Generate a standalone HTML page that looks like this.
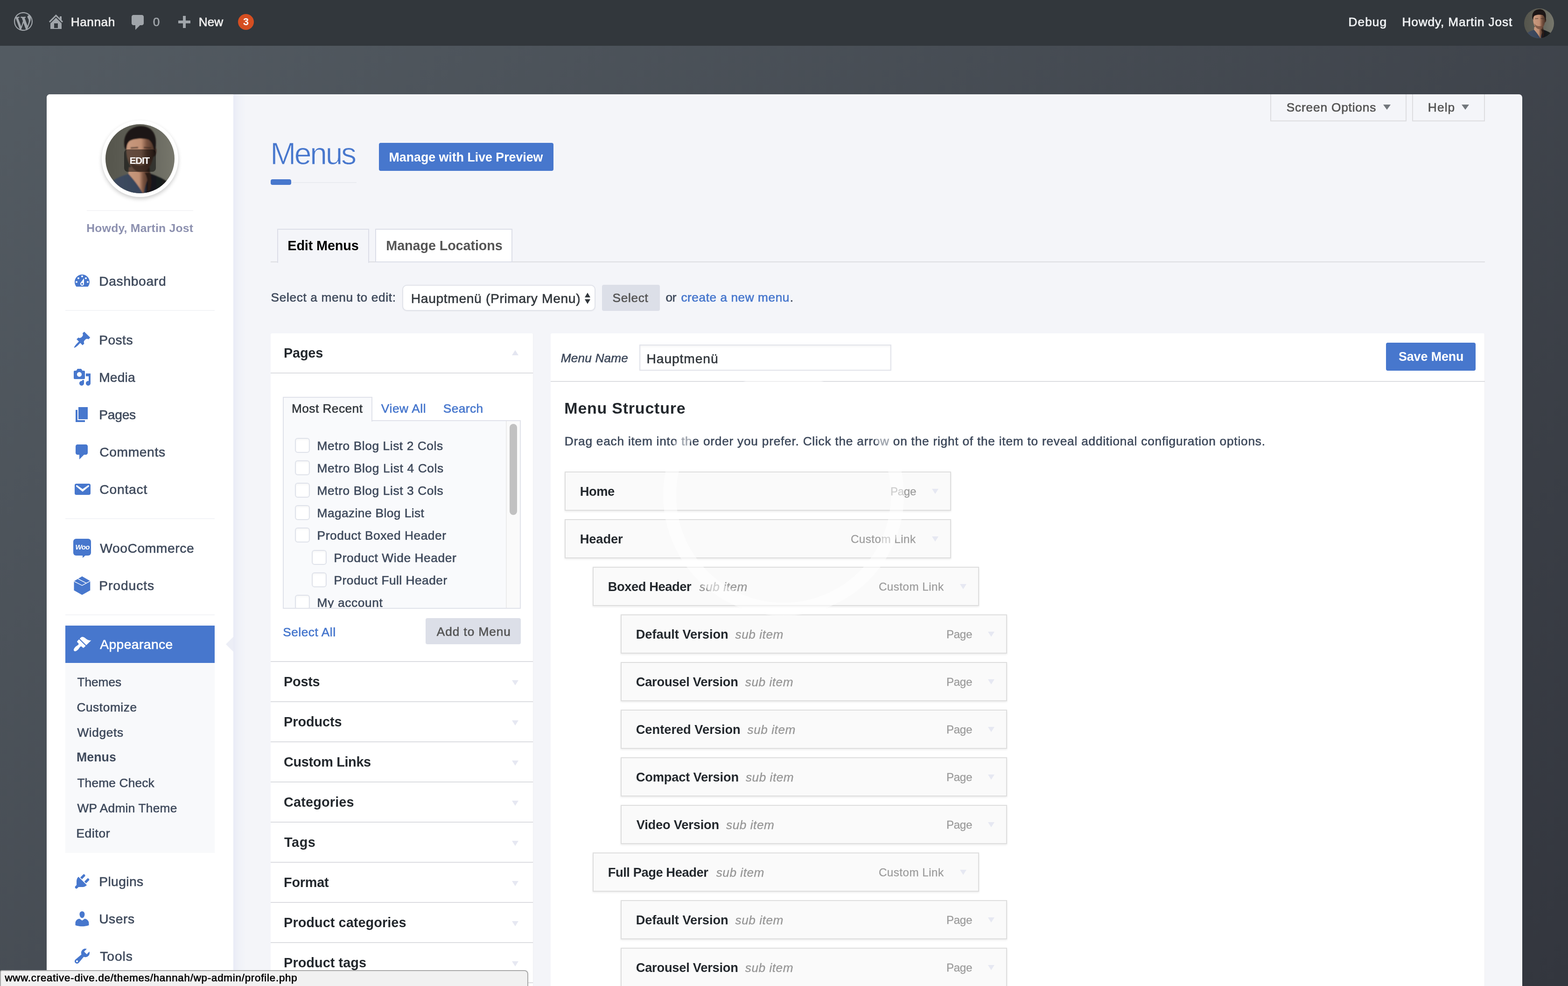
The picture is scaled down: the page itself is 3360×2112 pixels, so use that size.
<!DOCTYPE html>
<html lang="en">
<head>
<meta charset="utf-8">
<title>Menus ‹ Hannah — WordPress</title>
<style>
html,body{margin:0;padding:0}
body{width:3360px;height:2112px;overflow:hidden;position:relative;will-change:transform;
  font-family:'Liberation Sans',sans-serif;background:#434950}
header,nav,main,section,footer,ul,li{display:contents}
div,.t,.i{position:absolute;box-sizing:border-box}
.t{display:block;white-space:pre;line-height:1;margin:0;padding:0;text-decoration:none;font-weight:400;-webkit-text-stroke:.6px}
.b{-webkit-text-stroke:0}
.cb{width:32px;height:32px;background:#fff;border:2px solid #dfe2ea;border-radius:6px;box-shadow:inset 0 2px 4px rgba(0,0,0,.04)}
.mi{width:828px;height:84px;background:#fafafa;border:2px solid #dedede;box-shadow:0 2px 4px rgba(0,0,0,.08)}
.sep{height:2px;background:#f3f4f7;left:140px;width:320px}
.ln{height:2px;background:#dcdde1}
.ar{width:0;height:0;border-left:7px solid transparent;border-right:7px solid transparent;border-top:11px solid #e6e8f2}
</style>
</head>
<body>
<div style="left:0px;top:0px;width:3360px;height:2112px;background:linear-gradient(135deg,#545c63 0%,#33363e 100%)"></div>
<header>
<div style="left:0px;top:0px;width:3360px;height:98px;background:#32373c"></div>
<svg class="i" style="left:30px;top:26px;" width="40" height="40" viewBox="0 0 20 20"><path fill="#a0a5aa" fill-rule="evenodd" d="M20 10c0-5.51-4.49-10-10-10C4.48 0 0 4.49 0 10c0 5.52 4.48 10 10 10 5.51 0 10-4.48 10-10zM7.78 15.37L4.37 6.22c.55-.02 1.17-.08 1.17-.08.5-.06.44-1.13-.06-1.11 0 0-1.45.11-2.37.11-.18 0-.37 0-.58-.01C4.12 2.69 6.87 1.11 10 1.11c2.33 0 4.45.87 6.05 2.34-.68-.11-1.65.39-1.65 1.58 0 .74.45 1.36.9 2.1.35.61.55 1.36.55 2.46 0 1.49-1.4 5-1.4 5l-3.03-8.37c.54-.02.82-.17.82-.17.5-.05.44-1.25-.06-1.22 0 0-1.44.12-2.38.12-.87 0-2.33-.12-2.33-.12-.5-.03-.56 1.2-.06 1.22l.92.08 1.26 3.41zM17.41 10c.24-.64.74-1.87.43-4.25.7 1.29 1.05 2.71 1.05 4.25 0 3.29-1.73 6.24-4.4 7.78.97-2.59 1.94-5.2 2.92-7.78zM6.1 18.09C3.12 16.65 1.11 13.53 1.11 10c0-1.3.23-2.48.72-3.59C3.25 10.3 4.67 14.2 6.1 18.09zm4.03-6.63l2.58 6.98c-.86.29-1.76.45-2.71.45-.79 0-1.57-.11-2.29-.33.81-2.38 1.62-4.74 2.42-7.1z"/></svg>
<svg class="i" style="left:100px;top:26px;" width="40" height="40" viewBox="0 0 20 20"><path fill="#a0a5aa" fill-rule="evenodd" d="M16 8.5l1.53 1.53-1.06 1.06L10 4.62l-6.47 6.47-1.06-1.06L10 2.5l4 4v-2h2v4zm-6-2.46l6 5.99V18H4v-5.97zM12 17v-5H8v5h4z"/></svg>
<a class="t" style="left:151.80px;top:34.07px;font-size:26.26px;color:#eeeeee;letter-spacing:0.509px;-webkit-text-stroke:0.7px;">Hannah</a>
<svg class="i" style="left:275.6px;top:27.5px;" width="40" height="40" viewBox="0 0 20 20"><path fill="#a0a5aa" fill-rule="evenodd" d="M5 2h9c1.1 0 2 .9 2 2v7c0 1.1-.9 2-2 2h-2l-5 5v-5H5c-1.1 0-2-.9-2-2V4c0-1.1.9-2 2-2z"/></svg>
<span class="t" style="left:327.80px;top:34.07px;font-size:26.26px;color:#a0a5aa;">0</span>
<svg class="i" style="left:374px;top:30px;" width="40" height="40" viewBox="0 0 20 20"><path fill="#a0a5aa" fill-rule="evenodd" d="M17 7v3h-5v5H9v-5H4V7h5V2h3v5h5z"/></svg>
<a class="t" style="left:425.80px;top:34.07px;font-size:26.26px;color:#eeeeee;letter-spacing:-0.078px;-webkit-text-stroke:0.7px;">New</a>
<div style="left:510px;top:30px;width:34px;height:34px;background:#d54e21;border-radius:50%"></div>
<span class="t b" style="left:521.00px;top:36.19px;font-size:21.63px;color:#ffffff;font-weight:700;">3</span>
<a class="t" style="left:2889.50px;top:34.07px;font-size:26.26px;color:#eef0f2;letter-spacing:1.037px;-webkit-text-stroke:0.7px;">Debug</a>
<a class="t" style="left:3004.40px;top:34.07px;font-size:26.26px;color:#eef0f2;letter-spacing:0.862px;-webkit-text-stroke:0.7px;">Howdy, Martin Jost</a>
<svg class="i" style="left:3266px;top:18px;" width="64" height="64" viewBox="0 0 148 148"><defs><clipPath id="ca"><circle cx="74" cy="74" r="74"/></clipPath><linearGradient id="ga" x1="0" y1="0" x2="1" y2="0"><stop offset="0" stop-color="#55554c"/><stop offset=".45" stop-color="#5f5f56"/><stop offset="1" stop-color="#77776c"/></linearGradient><linearGradient id="sa" x1="0" y1="0" x2="1" y2="0"><stop offset="0" stop-color="#c99a7f"/><stop offset=".5" stop-color="#c08f73"/><stop offset=".68" stop-color="#7a5340"/><stop offset="1" stop-color="#3a2820"/></linearGradient><linearGradient id="ha" x1="0" y1="0" x2="1" y2="0"><stop offset="0" stop-color="#3f4c60"/><stop offset=".55" stop-color="#36435a"/><stop offset=".62" stop-color="#17181c"/><stop offset="1" stop-color="#1b1c20"/></linearGradient><filter id="fa" x="-20%" y="-20%" width="140%" height="140%"><feGaussianBlur stdDeviation="1.3"/></filter></defs><g clip-path="url(#ca)"><rect width="148" height="148" fill="url(#ga)"/><g filter="url(#fa)"><path d="M14 150 L17 120 C30 112 42 109 50 106 L96 106 C108 110 122 116 131 122 L136 150 Z" fill="url(#ha)"/><path d="M50 92 L94 92 L96 108 C90 118 84 132 82 148 L80 148 C70 130 58 116 49 106 Z" fill="url(#sa)"/><path d="M84 104 C90 112 92 128 90 146 L96 140 C100 126 98 112 96 104 Z" fill="#2b1a14"/><path d="M44 40 C44 22 60 16 76 17 C94 18 106 30 105 50 C108 50 110 54 109 60 C108 68 104 70 102 70 C100 86 90 102 76 103 C62 103 50 90 46 70 C44 60 44 50 44 40 Z" fill="url(#sa)"/><path d="M41 50 C36 22 52 5 76 4 C98 4 110 20 108 44 C108 52 106 58 104 62 C104 48 100 38 92 33 C82 30 62 30 52 36 C47 40 45 46 45 58 Z" fill="#1e1713"/><path d="M50 74 C54 92 64 103 76 103 C90 102 98 90 102 72 C96 84 88 88 76 88 C64 88 56 84 50 74 Z" fill="#6d4a3a" opacity=".75"/><path d="M54 51 L70 50 M82 50 L98 51" stroke="#3a2a22" stroke-width="3" fill="none" opacity=".7"/></g></g></svg>
</header>
<div style="left:100px;top:202px;width:3162px;height:1910px;background:#f4f5f9;border-radius:7px 7px 0 0"></div>
<div style="left:100px;top:202px;width:400px;height:1910px;background:#fff;border-radius:7px 0 0 0"></div>
<div style="left:500px;top:202px;width:28px;height:1910px;background:linear-gradient(90deg,#e9ebf6 0%,#f0f2f8 45%,#f4f5f9 100%)"></div>
<nav>
<div style="left:218px;top:258px;width:164px;height:164px;border-radius:50%;background:#fff;box-shadow:0 4px 8px rgba(0,0,0,.2)"></div><svg class="i" style="left:226px;top:266px;" width="148" height="148" viewBox="0 0 148 148"><defs><clipPath id="cb"><circle cx="74" cy="74" r="74"/></clipPath><linearGradient id="gb" x1="0" y1="0" x2="1" y2="0"><stop offset="0" stop-color="#55554c"/><stop offset=".45" stop-color="#5f5f56"/><stop offset="1" stop-color="#77776c"/></linearGradient><linearGradient id="sb" x1="0" y1="0" x2="1" y2="0"><stop offset="0" stop-color="#c99a7f"/><stop offset=".5" stop-color="#c08f73"/><stop offset=".68" stop-color="#7a5340"/><stop offset="1" stop-color="#3a2820"/></linearGradient><linearGradient id="hb" x1="0" y1="0" x2="1" y2="0"><stop offset="0" stop-color="#3f4c60"/><stop offset=".55" stop-color="#36435a"/><stop offset=".62" stop-color="#17181c"/><stop offset="1" stop-color="#1b1c20"/></linearGradient><filter id="fb" x="-20%" y="-20%" width="140%" height="140%"><feGaussianBlur stdDeviation="1.3"/></filter></defs><g clip-path="url(#cb)"><rect width="148" height="148" fill="url(#gb)"/><g filter="url(#fb)"><path d="M14 150 L17 120 C30 112 42 109 50 106 L96 106 C108 110 122 116 131 122 L136 150 Z" fill="url(#hb)"/><path d="M50 92 L94 92 L96 108 C90 118 84 132 82 148 L80 148 C70 130 58 116 49 106 Z" fill="url(#sb)"/><path d="M84 104 C90 112 92 128 90 146 L96 140 C100 126 98 112 96 104 Z" fill="#2b1a14"/><path d="M44 40 C44 22 60 16 76 17 C94 18 106 30 105 50 C108 50 110 54 109 60 C108 68 104 70 102 70 C100 86 90 102 76 103 C62 103 50 90 46 70 C44 60 44 50 44 40 Z" fill="url(#sb)"/><path d="M41 50 C36 22 52 5 76 4 C98 4 110 20 108 44 C108 52 106 58 104 62 C104 48 100 38 92 33 C82 30 62 30 52 36 C47 40 45 46 45 58 Z" fill="#1e1713"/><path d="M50 74 C54 92 64 103 76 103 C90 102 98 90 102 72 C96 84 88 88 76 88 C64 88 56 84 50 74 Z" fill="#6d4a3a" opacity=".75"/><path d="M54 51 L70 50 M82 50 L98 51" stroke="#3a2a22" stroke-width="3" fill="none" opacity=".7"/></g></g></svg>
<div style="left:266px;top:320px;width:68px;height:48px;background:rgba(0,0,0,.5);border-radius:8px"></div>
<span class="t b" style="left:277.80px;top:334.26px;font-size:20.6px;color:#ffffff;font-weight:700;letter-spacing:-1.177px;">EDIT</span>
<div style="left:186px;top:450px;width:228px;height:2px;background:#f4f4f7"></div>
<span class="t b" style="left:185.30px;top:477.37px;font-size:24.72px;color:#8c90af;font-weight:700;letter-spacing:0.227px;">Howdy, Martin Jost</span>
<div style="left:140px;top:1340px;width:320px;height:80px;background:#4777cd"></div>
<div style="left:140px;top:1420px;width:320px;height:407px;background:#f8f9fb"></div>
<div style="left:484px;top:1364px;width:0px;height:0px;width:0;height:0;border-top:16px solid transparent;border-bottom:16px solid transparent;border-right:16px solid #eceef6"></div>
<svg class="i" style="left:156px;top:582px;" width="40" height="40" viewBox="0 0 20 20"><path fill="#4777cd" fill-rule="evenodd" d="M3.76 16h12.48c1.1-1.37 1.76-3.11 1.76-5 0-4.42-3.58-8-8-8s-8 3.58-8 8c0 1.89.66 3.63 1.76 5zM10 4c.55 0 1 .45 1 1s-.45 1-1 1-1-.45-1-1 .45-1 1-1zM6 6c.55 0 1 .45 1 1s-.45 1-1 1-1-.45-1-1 .45-1 1-1zm8 0c.55 0 1 .45 1 1s-.45 1-1 1-1-.45-1-1 .45-1 1-1zm-5.37 5.55L12 7v6c0 1.1-.9 2-2 2s-2-.9-2-2c0-.57.24-1.08.63-1.45zM4 10c.55 0 1 .45 1 1s-.45 1-1 1-1-.45-1-1 .45-1 1-1zm12 0c.55 0 1 .45 1 1s-.45 1-1 1-1-.45-1-1 .45-1 1-1zm-5 3c0-.55-.45-1-1-1s-1 .45-1 1 .45 1 1 1 1-.45 1-1z"/></svg>
<a class="t" style="left:212.20px;top:588.06px;font-size:28.28px;color:#3f4a5c;letter-spacing:0.643px;">Dashboard</a>
<svg class="i" style="left:156px;top:708px;" width="40" height="40" viewBox="0 0 20 20"><path fill="#4777cd" fill-rule="evenodd" d="M10.44 3.02l1.82-1.82 6.36 6.35-1.83 1.82c-1.05-.68-2.48-.57-3.41.36l-.75.75c-.92.93-1.04 2.35-.35 3.41l-1.83 1.82-2.41-2.41-2.8 2.79c-.42.42-3.38 2.71-3.8 2.29s1.86-3.39 2.28-3.81l2.79-2.79L4.1 9.36l1.83-1.82c1.05.69 2.48.57 3.4-.36l.75-.75c.93-.92 1.05-2.35.36-3.41z"/></svg>
<a class="t" style="left:212.20px;top:714.06px;font-size:28.28px;color:#3f4a5c;letter-spacing:0.410px;">Posts</a>
<svg class="i" style="left:156px;top:788px;" width="40" height="40" viewBox="0 0 20 20"><path fill="#4777cd" fill-rule="evenodd" d="M13 11V4c0-.55-.45-1-1-1h-1.67L9 1H5L3.67 3H2c-.55 0-1 .45-1 1v7c0 .55.45 1 1 1h10c.55 0 1-.45 1-1zM7 4.5c1.38 0 2.5 1.12 2.5 2.5S8.38 9.5 7 9.5 4.5 8.38 4.5 7 5.62 4.5 7 4.5zM14 6h5v10.5c0 1.38-1.12 2.5-2.5 2.5S14 17.88 14 16.5s1.12-2.5 2.5-2.5c.17 0 .34.02.5.05V9h-3V6zm-4 8.05V13h2v3.5c0 1.38-1.12 2.5-2.5 2.5S7 17.88 7 16.5 8.12 14 9.5 14c.17 0 .34.02.5.05z"/></svg>
<a class="t" style="left:212.20px;top:794.06px;font-size:28.28px;color:#3f4a5c;letter-spacing:0.109px;">Media</a>
<svg class="i" style="left:156px;top:868px;" width="40" height="40" viewBox="0 0 20 20"><path fill="#4777cd" fill-rule="evenodd" d="M6 15V2h10v13H6zm-1 1h8v2H3V5h2v11z"/></svg>
<a class="t" style="left:212.20px;top:874.06px;font-size:28.28px;color:#3f4a5c;letter-spacing:-0.278px;">Pages</a>
<svg class="i" style="left:156px;top:948px;" width="40" height="40" viewBox="0 0 20 20"><path fill="#4777cd" fill-rule="evenodd" d="M5 2h9c1.1 0 2 .9 2 2v7c0 1.1-.9 2-2 2h-2l-5 5v-5H5c-1.1 0-2-.9-2-2V4c0-1.1.9-2 2-2z"/></svg>
<a class="t" style="left:213.20px;top:954.06px;font-size:28.28px;color:#3f4a5c;letter-spacing:0.598px;">Comments</a>
<svg class="i" style="left:156px;top:1028px;" width="40" height="40" viewBox="0 0 20 20"><path fill="#4777cd" fill-rule="evenodd" d="M3.87 4h13.25C18.37 4 19 4.59 19 5.79v8.42c0 1.19-.63 1.79-1.88 1.79H3.87c-1.25 0-1.88-.6-1.88-1.79V5.79c0-1.2.63-1.79 1.88-1.79zm6.62 8.6l6.74-5.53c.24-.2.43-.66.13-1.07-.29-.41-.82-.42-1.17-.17l-5.7 3.86L4.8 5.83c-.35-.25-.88-.24-1.17.17-.3.41-.11.87.13 1.07z"/></svg>
<a class="t" style="left:213.20px;top:1034.06px;font-size:28.28px;color:#3f4a5c;letter-spacing:0.790px;">Contact</a>
<div style="left:157px;top:1154px;width:38px;height:36px;background:#4777cd;border-radius:6px"></div><div style="left:177px;top:1188px;width:0;height:0;border-left:0 solid transparent;border-right:8px solid transparent;border-top:7px solid #4777cd"></div><span class="t b" style="left:161.5px;top:1164px;font-size:15px;font-weight:700;font-style:italic;color:#fff;letter-spacing:-.7px">Woo</span>
<a class="t" style="left:214.20px;top:1160.06px;font-size:28.28px;color:#3f4a5c;letter-spacing:0.560px;">WooCommerce</a>
<svg class="i" style="left:156px;top:1232px" width="40" height="44" viewBox="0 0 40 44"><path fill="#4777cd" d="M19.9 2.4 L37.3 12.6 L37.3 32.5 L19.9 42.3 L2.5 32.5 L2.5 13.1 Z"/><path d="M2.5 13.1 L19.9 22 L37.3 12.6 M11.2 7.8 L28.6 16.9" stroke="#fff" stroke-width="1.4" fill="none"/></svg>
<a class="t" style="left:212.20px;top:1240.06px;font-size:28.28px;color:#3f4a5c;letter-spacing:0.927px;">Products</a>
<svg class="i" style="left:156px;top:1360px;" width="40" height="40" viewBox="0 0 20 20"><path fill="#ffffff" fill-rule="evenodd" d="M14.48 11.06L7.41 3.99l1.5-1.5c.5-.56 2.3-.47 3.51.32 1.21.8 1.43 1.28 2.91 2.1 1.18.64 2.45 1.26 4.45.85zm-.71.71L6.7 4.7 4.93 6.47c-.39.39-.39 1.02 0 1.41l1.06 1.06c.39.39.39 1.03 0 1.42-.6.6-1.43 1.11-2.21 1.69-.35.26-.7.53-1.01.84C1.43 14.23.4 16.08 1.4 17.07c.99 1 2.84-.03 4.18-1.36.31-.31.58-.66.85-1.02.57-.78 1.08-1.61 1.69-2.21.39-.39 1.02-.39 1.41 0l1.06 1.06c.39.39 1.02.39 1.41 0z"/></svg>
<a class="t" style="left:214.20px;top:1366.06px;font-size:28.28px;color:#ffffff;letter-spacing:0.409px;">Appearance</a>
<svg class="i" style="left:156px;top:1868px;" width="40" height="40" viewBox="0 0 20 20"><path fill="#4777cd" fill-rule="evenodd" d="M13.11 4.36L9.87 7.6 8 5.73l3.24-3.24c.35-.34 1.05-.2 1.56.32.52.51.66 1.21.31 1.55zm-8 1.77l.91-1.12 9.01 9.01-1.19.84c-.71.71-2.63 1.16-3.82 1.16H6.14L4.9 17.26c-.59.59-1.54.59-2.12 0-.59-.58-.59-1.53 0-2.12l1.24-1.24v-3.88c0-1.13.4-3.19 1.09-3.89zm7.26 3.97l3.24-3.24c.34-.35 1.04-.21 1.55.31.52.51.66 1.21.31 1.55l-3.24 3.25z"/></svg>
<a class="t" style="left:212.20px;top:1874.06px;font-size:28.28px;color:#3f4a5c;letter-spacing:0.388px;">Plugins</a>
<svg class="i" style="left:156px;top:1948px;" width="40" height="40" viewBox="0 0 20 20"><path fill="#4777cd" fill-rule="evenodd" d="M10 9.25c-2.27 0-2.73-3.44-2.73-3.44C7 4.02 7.82 2 9.97 2c2.16 0 2.98 2.02 2.71 3.81 0 0-.41 3.44-2.68 3.44zm0 2.57L12.72 10c2.39 0 4.52 2.33 4.52 4.53v2.49s-3.65 1.13-7.24 1.13c-3.65 0-7.24-1.13-7.24-1.13v-2.49c0-2.25 1.94-4.48 4.47-4.48z"/></svg>
<a class="t" style="left:212.20px;top:1954.06px;font-size:28.28px;color:#3f4a5c;letter-spacing:0.505px;">Users</a>
<svg class="i" style="left:156px;top:2028px;" width="40" height="40" viewBox="0 0 20 20"><path fill="#4777cd" fill-rule="evenodd" d="M16.68 9.77c-1.34 1.34-3.3 1.67-4.95.99l-5.41 6.52c-.99.99-2.59.99-3.58 0s-.99-2.59 0-3.57l6.52-5.42c-.68-1.65-.35-3.61.99-4.95 1.28-1.28 3.12-1.62 4.72-1.06l-2.89 2.89 2.82 2.82 2.86-2.87c.53 1.58.18 3.39-1.08 4.65zM3.81 16.21c.4.39 1.04.39 1.43 0 .4-.4.4-1.04 0-1.43-.39-.4-1.03-.4-1.43 0-.39.39-.39 1.03 0 1.43z"/></svg>
<a class="t" style="left:214.20px;top:2034.06px;font-size:28.28px;color:#3f4a5c;letter-spacing:0.937px;">Tools</a>
<div class="sep" style="left:140px;top:664px;width:320px;height:2px;"></div>
<div class="sep" style="left:140px;top:1110px;width:320px;height:2px;"></div>
<div class="sep" style="left:140px;top:1316px;width:320px;height:2px;"></div>
<a class="t" style="left:165.40px;top:1447.77px;font-size:26.26px;color:#3f4a5c;">Themes</a>
<a class="t" style="left:164.40px;top:1501.77px;font-size:26.26px;color:#3f4a5c;letter-spacing:0.588px;">Customize</a>
<a class="t" style="left:165.40px;top:1555.77px;font-size:26.26px;color:#3f4a5c;letter-spacing:0.634px;">Widgets</a>
<a class="t b" style="left:163.90px;top:1609.33px;font-size:26.78px;color:#3f4a5c;font-weight:700;letter-spacing:0.055px;">Menus</a>
<a class="t" style="left:165.40px;top:1663.77px;font-size:26.26px;color:#3f4a5c;letter-spacing:0.193px;">Theme Check</a>
<a class="t" style="left:165.40px;top:1717.77px;font-size:26.26px;color:#3f4a5c;letter-spacing:0.256px;">WP Admin Theme</a>
<a class="t" style="left:163.40px;top:1771.77px;font-size:26.26px;color:#3f4a5c;letter-spacing:0.694px;">Editor</a>
</nav>
<main>
<div style="left:2722px;top:202px;width:292px;height:58px;border:2px solid #dddde0;border-top:0;background:#f4f5f9"></div>
<span class="t" style="left:2756.80px;top:217.07px;font-size:26.26px;color:#555555;letter-spacing:0.815px;-webkit-text-stroke:0.7px;">Screen Options</span>
<div style="left:2964px;top:224px;width:0px;height:0px;width:0;height:0;border-left:8px solid transparent;border-right:8px solid transparent;border-top:11px solid #72777c"></div>
<div style="left:3026px;top:202px;width:156px;height:58px;border:2px solid #dddde0;border-top:0;background:#f4f5f9"></div>
<span class="t" style="left:3059.80px;top:217.07px;font-size:26.26px;color:#555555;letter-spacing:1.137px;-webkit-text-stroke:0.7px;">Help</span>
<div style="left:3132px;top:224px;width:0px;height:0px;width:0;height:0;border-left:8px solid transparent;border-right:8px solid transparent;border-top:11px solid #72777c"></div>
<h1 class="t" style="left:579.20px;top:295.53px;font-size:66px;color:#4777cd;letter-spacing:-3.299px;-webkit-text-stroke:0.9px #f4f5f9;">Menus</h1>
<div style="left:624px;top:390px;width:140px;height:2px;background:#e9ebf1"></div>
<div style="left:580px;top:384px;width:44px;height:12px;background:#4777cd;border-radius:4px"></div>
<div style="left:812px;top:306px;width:374px;height:60px;background:#4777cd;border-radius:4px"></div>
<a class="t b" style="left:833.60px;top:323.73px;font-size:26.78px;color:#ffffff;font-weight:700;letter-spacing:-0.017px;">Manage with Live Preview</a>
<div style="left:580px;top:560px;width:2602px;height:2px;background:#dddee2"></div>
<div style="left:594px;top:490px;width:197px;height:73px;border:2px solid #dcdee8;border-bottom:0;background:#f4f5f9"></div>
<a class="t b" style="left:616.30px;top:512.09px;font-size:28.84px;color:#000000;font-weight:700;letter-spacing:-0.147px;">Edit Menus</a>
<div style="left:804px;top:490px;width:294px;height:72px;border:2px solid #dcdee8;background:#fff"></div>
<a class="t b" style="left:827.30px;top:512.09px;font-size:28.84px;color:#555555;font-weight:700;letter-spacing:-0.137px;">Manage Locations</a>
<label class="t" style="left:580.50px;top:623.97px;font-size:26.26px;color:#3f4a5c;letter-spacing:0.647px;">Select a menu to edit:</label>
<div style="left:862px;top:610px;width:414px;height:56px;border:2px solid #e1e3ea;border-radius:10px;background:#fff;box-shadow:0 1px 2px rgba(0,0,0,.05)"></div>
<span class="t" style="left:880.80px;top:624.66px;font-size:28.28px;color:#32373c;letter-spacing:0.613px;">Hauptmenü (Primary Menu)</span>
<div style="left:1253px;top:627px;width:0px;height:0px;width:0;height:0;border-left:6.5px solid transparent;border-right:6.5px solid transparent;border-bottom:10px solid #32373c"></div>
<div style="left:1253px;top:641px;width:0px;height:0px;width:0;height:0;border-left:6.5px solid transparent;border-right:6.5px solid transparent;border-top:10px solid #32373c"></div>
<div style="left:1290px;top:610px;width:124px;height:56px;background:#dcdfe8;border-radius:4px"></div>
<span class="t" style="left:1312.60px;top:624.77px;font-size:26.26px;color:#555555;letter-spacing:0.627px;">Select</span>
<span class="t" style="left:1426.60px;top:623.97px;font-size:26.26px;color:#3f4a5c;letter-spacing:-0.499px;">or</span>
<a class="t" style="left:1459.40px;top:623.97px;font-size:26.26px;color:#4777cd;letter-spacing:0.547px;">create a new menu</a>
<span class="t" style="left:1692.80px;top:623.97px;font-size:26.26px;color:#3f4a5c;">.</span>
<section>
<div style="left:580px;top:714px;width:563px;height:1398px;background:#fff;border-right:1px solid #efeff3;border-radius:3px 3px 0 0"></div>
<h3 class="t b" style="left:608.10px;top:742.19px;font-size:28.84px;color:#23282d;font-weight:700;letter-spacing:-0.201px;">Pages</h3>
<div style="left:1097px;top:750px;width:0px;height:0px;width:0;height:0;border-left:7px solid transparent;border-right:7px solid transparent;border-bottom:11px solid #e4e6f1"></div>
<div class="ln" style="left:580px;top:798px;width:562px;height:2px;"></div>
<div style="left:606px;top:900px;width:510px;height:404px;border:2px solid #e0e2ea;background:#f9fafc"></div>
<div style="left:606px;top:850px;width:192px;height:53px;border:2px solid #e0e2ea;border-bottom:0;background:#f9fafc"></div>
<a class="t" style="left:624.90px;top:861.57px;font-size:26.26px;color:#32373c;letter-spacing:0.474px;">Most Recent</a>
<a class="t" style="left:816.80px;top:861.57px;font-size:26.26px;color:#4777cd;letter-spacing:0.621px;">View All</a>
<a class="t" style="left:949.80px;top:861.57px;font-size:26.26px;color:#4777cd;letter-spacing:0.445px;">Search</a>
<div style="left:608px;top:902px;width:506px;height:400px;overflow:hidden">
<div class="cb" style="left:23.5px;top:36px;width:32px;height:32px;"></div>
<label class="t" style="left:71.60px;top:39.77px;font-size:26.26px;color:#3f4a5c;letter-spacing:0.607px;">Metro Blog List 2 Cols</label>
<div class="cb" style="left:23.5px;top:84px;width:32px;height:32px;"></div>
<label class="t" style="left:71.60px;top:87.77px;font-size:26.26px;color:#3f4a5c;letter-spacing:0.655px;">Metro Blog List 4 Cols</label>
<div class="cb" style="left:23.5px;top:132px;width:32px;height:32px;"></div>
<label class="t" style="left:71.60px;top:135.77px;font-size:26.26px;color:#3f4a5c;letter-spacing:0.631px;">Metro Blog List 3 Cols</label>
<div class="cb" style="left:23.5px;top:180px;width:32px;height:32px;"></div>
<label class="t" style="left:71.60px;top:183.77px;font-size:26.26px;color:#3f4a5c;letter-spacing:0.435px;">Magazine Blog List</label>
<div class="cb" style="left:23.5px;top:228px;width:32px;height:32px;"></div>
<label class="t" style="left:71.60px;top:231.77px;font-size:26.26px;color:#3f4a5c;letter-spacing:0.567px;">Product Boxed Header</label>
<div class="cb" style="left:59.5px;top:276px;width:32px;height:32px;"></div>
<label class="t" style="left:107.60px;top:279.77px;font-size:26.26px;color:#3f4a5c;letter-spacing:0.622px;">Product Wide Header</label>
<div class="cb" style="left:59.5px;top:324px;width:32px;height:32px;"></div>
<label class="t" style="left:107.60px;top:327.77px;font-size:26.26px;color:#3f4a5c;letter-spacing:0.505px;">Product Full Header</label>
<div class="cb" style="left:23.5px;top:372px;width:32px;height:32px;"></div>
<label class="t" style="left:71.60px;top:375.77px;font-size:26.26px;color:#3f4a5c;letter-spacing:0.674px;">My account</label>
<div style="left:476px;top:0px;width:30px;height:400px;background:#fafafa;border-left:2px solid #ececec"></div>
<div style="left:484px;top:6px;width:16px;height:195px;background:#c1c1c1;border-radius:8px"></div>
</div>
<a class="t" style="left:606.20px;top:1340.77px;font-size:26.26px;color:#4777cd;letter-spacing:0.534px;">Select All</a>
<div style="left:912px;top:1324px;width:204px;height:56px;background:#dcdfe8;border-radius:4px"></div>
<span class="t" style="left:935.80px;top:1339.77px;font-size:26.26px;color:#555555;letter-spacing:0.915px;">Add to Menu</span>
<div class="ln" style="left:580px;top:1416px;width:562px;height:2px;"></div>
<h3 class="t b" style="left:608.10px;top:1446.29px;font-size:28.84px;color:#23282d;font-weight:700;letter-spacing:-0.268px;">Posts</h3>
<div class="ar" style="left:1097px;top:1456.5px;width:0px;height:0px;"></div>
<div class="ln" style="left:580px;top:1502px;width:562px;height:2px;"></div>
<h3 class="t b" style="left:608.10px;top:1532.29px;font-size:28.84px;color:#23282d;font-weight:700;letter-spacing:-0.058px;">Products</h3>
<div class="ar" style="left:1097px;top:1542.5px;width:0px;height:0px;"></div>
<div class="ln" style="left:580px;top:1588px;width:562px;height:2px;"></div>
<h3 class="t b" style="left:608.10px;top:1618.29px;font-size:28.84px;color:#23282d;font-weight:700;letter-spacing:-0.325px;">Custom Links</h3>
<div class="ar" style="left:1097px;top:1628.5px;width:0px;height:0px;"></div>
<div class="ln" style="left:580px;top:1674px;width:562px;height:2px;"></div>
<h3 class="t b" style="left:608.10px;top:1704.29px;font-size:28.84px;color:#23282d;font-weight:700;letter-spacing:0.160px;">Categories</h3>
<div class="ar" style="left:1097px;top:1714.5px;width:0px;height:0px;"></div>
<div class="ln" style="left:580px;top:1760px;width:562px;height:2px;"></div>
<h3 class="t b" style="left:609.10px;top:1790.29px;font-size:28.84px;color:#23282d;font-weight:700;letter-spacing:0.530px;">Tags</h3>
<div class="ar" style="left:1097px;top:1800.5px;width:0px;height:0px;"></div>
<div class="ln" style="left:580px;top:1846px;width:562px;height:2px;"></div>
<h3 class="t b" style="left:608.10px;top:1876.29px;font-size:28.84px;color:#23282d;font-weight:700;letter-spacing:-0.221px;">Format</h3>
<div class="ar" style="left:1097px;top:1886.5px;width:0px;height:0px;"></div>
<div class="ln" style="left:580px;top:1932px;width:562px;height:2px;"></div>
<h3 class="t b" style="left:608.10px;top:1962.29px;font-size:28.84px;color:#23282d;font-weight:700;letter-spacing:0.071px;">Product categories</h3>
<div class="ar" style="left:1097px;top:1972.5px;width:0px;height:0px;"></div>
<div class="ln" style="left:580px;top:2018px;width:562px;height:2px;"></div>
<h3 class="t b" style="left:608.10px;top:2048.29px;font-size:28.84px;color:#23282d;font-weight:700;letter-spacing:0.058px;">Product tags</h3>
<div class="ar" style="left:1097px;top:2058.5px;width:0px;height:0px;"></div>
<div class="ln" style="left:580px;top:2104px;width:562px;height:2px;"></div>
</section>
<section>
<div style="left:1180px;top:714px;width:2002px;height:1398px;background:#fff;border-right:1px solid #efeff3;border-radius:3px 3px 0 0"></div>
<label class="t" style="left:1201.80px;top:753.77px;font-size:26.26px;color:#3f4a5c;font-style:italic;letter-spacing:0.128px;">Menu Name</label>
<div style="left:1370px;top:738px;width:540px;height:56px;border:2px solid #e1e3ea;background:#fff;box-shadow:inset 0 2px 4px rgba(0,0,0,.05)"></div>
<span class="t" style="left:1385.50px;top:753.76px;font-size:28.28px;color:#32373c;letter-spacing:0.874px;">Hauptmenü</span>
<div style="left:2970px;top:734px;width:192px;height:60px;background:#4777cd;border-radius:4px"></div>
<a class="t b" style="left:2997.00px;top:751.33px;font-size:26.78px;color:#ffffff;font-weight:700;letter-spacing:-0.060px;">Save Menu</a>
<div class="ln" style="left:1180px;top:816px;width:2002px;height:2px;"></div>
<h3 class="t b" style="left:1209.30px;top:856.93px;font-size:33.99px;color:#23282d;font-weight:700;letter-spacing:0.774px;">Menu Structure</h3>
<p class="t" style="left:1209.80px;top:931.77px;font-size:26.26px;color:#3f4a5c;letter-spacing:0.768px;">Drag each item into the order you prefer. Click the arrow on the right of the item to reveal additional configuration options.</p>
<ul>
<li>
<div class="mi" style="left:1210px;top:1010px;width:828px;height:84px;"></div>
<span class="t b" style="left:1242.70px;top:1039.19px;font-size:27.3px;color:#23282d;font-weight:700;letter-spacing:-0.419px;">Home</span>
<span class="t" style="left:1908.00px;top:1040.98px;font-size:24.24px;color:#9c9c9c;letter-spacing:-0.407px;-webkit-text-stroke:0.3px;">Page</span>
<div class="ar" style="left:1997px;top:1047px;width:0px;height:0px;"></div>
</li>
<li>
<div class="mi" style="left:1210px;top:1112px;width:828px;height:84px;"></div>
<span class="t b" style="left:1242.70px;top:1141.19px;font-size:27.3px;color:#23282d;font-weight:700;letter-spacing:-0.106px;">Header</span>
<span class="t" style="left:1822.90px;top:1142.98px;font-size:24.24px;color:#9c9c9c;letter-spacing:0.443px;-webkit-text-stroke:0.3px;">Custom Link</span>
<div class="ar" style="left:1997px;top:1149px;width:0px;height:0px;"></div>
</li>
<li>
<div class="mi" style="left:1270px;top:1214px;width:828px;height:84px;"></div>
<span class="t b" style="left:1302.70px;top:1243.19px;font-size:27.3px;color:#23282d;font-weight:700;letter-spacing:-0.413px;">Boxed Header</span>
<span class="t" style="left:1498.60px;top:1244.07px;font-size:26.26px;color:#969696;font-style:italic;letter-spacing:0.509px;-webkit-text-stroke:0.3px;">sub item</span>
<span class="t" style="left:1882.90px;top:1244.98px;font-size:24.24px;color:#9c9c9c;letter-spacing:0.443px;-webkit-text-stroke:0.3px;">Custom Link</span>
<div class="ar" style="left:2057px;top:1251px;width:0px;height:0px;"></div>
</li>
<li>
<div class="mi" style="left:1330px;top:1316px;width:828px;height:84px;"></div>
<span class="t b" style="left:1362.70px;top:1345.19px;font-size:27.3px;color:#23282d;font-weight:700;letter-spacing:-0.046px;">Default Version</span>
<span class="t" style="left:1575.60px;top:1346.07px;font-size:26.26px;color:#969696;font-style:italic;letter-spacing:0.509px;-webkit-text-stroke:0.3px;">sub item</span>
<span class="t" style="left:2028.00px;top:1346.98px;font-size:24.24px;color:#9c9c9c;letter-spacing:-0.407px;-webkit-text-stroke:0.3px;">Page</span>
<div class="ar" style="left:2117px;top:1353px;width:0px;height:0px;"></div>
</li>
<li>
<div class="mi" style="left:1330px;top:1418px;width:828px;height:84px;"></div>
<span class="t b" style="left:1362.70px;top:1447.19px;font-size:27.3px;color:#23282d;font-weight:700;letter-spacing:-0.249px;">Carousel Version</span>
<span class="t" style="left:1596.80px;top:1448.07px;font-size:26.26px;color:#969696;font-style:italic;letter-spacing:0.509px;-webkit-text-stroke:0.3px;">sub item</span>
<span class="t" style="left:2028.00px;top:1448.98px;font-size:24.24px;color:#9c9c9c;letter-spacing:-0.407px;-webkit-text-stroke:0.3px;">Page</span>
<div class="ar" style="left:2117px;top:1455px;width:0px;height:0px;"></div>
</li>
<li>
<div class="mi" style="left:1330px;top:1520px;width:828px;height:84px;"></div>
<span class="t b" style="left:1362.70px;top:1549.19px;font-size:27.3px;color:#23282d;font-weight:700;letter-spacing:-0.030px;">Centered Version</span>
<span class="t" style="left:1601.60px;top:1550.07px;font-size:26.26px;color:#969696;font-style:italic;letter-spacing:0.509px;-webkit-text-stroke:0.3px;">sub item</span>
<span class="t" style="left:2028.00px;top:1550.98px;font-size:24.24px;color:#9c9c9c;letter-spacing:-0.407px;-webkit-text-stroke:0.3px;">Page</span>
<div class="ar" style="left:2117px;top:1557px;width:0px;height:0px;"></div>
</li>
<li>
<div class="mi" style="left:1330px;top:1622px;width:828px;height:84px;"></div>
<span class="t b" style="left:1362.70px;top:1651.19px;font-size:27.3px;color:#23282d;font-weight:700;letter-spacing:-0.187px;">Compact Version</span>
<span class="t" style="left:1597.90px;top:1652.07px;font-size:26.26px;color:#969696;font-style:italic;letter-spacing:0.509px;-webkit-text-stroke:0.3px;">sub item</span>
<span class="t" style="left:2028.00px;top:1652.98px;font-size:24.24px;color:#9c9c9c;letter-spacing:-0.407px;-webkit-text-stroke:0.3px;">Page</span>
<div class="ar" style="left:2117px;top:1659px;width:0px;height:0px;"></div>
</li>
<li>
<div class="mi" style="left:1330px;top:1724px;width:828px;height:84px;"></div>
<span class="t b" style="left:1363.70px;top:1753.19px;font-size:27.3px;color:#23282d;font-weight:700;letter-spacing:-0.205px;">Video Version</span>
<span class="t" style="left:1556.10px;top:1754.07px;font-size:26.26px;color:#969696;font-style:italic;letter-spacing:0.509px;-webkit-text-stroke:0.3px;">sub item</span>
<span class="t" style="left:2028.00px;top:1754.98px;font-size:24.24px;color:#9c9c9c;letter-spacing:-0.407px;-webkit-text-stroke:0.3px;">Page</span>
<div class="ar" style="left:2117px;top:1761px;width:0px;height:0px;"></div>
</li>
<li>
<div class="mi" style="left:1270px;top:1826px;width:828px;height:84px;"></div>
<span class="t b" style="left:1302.70px;top:1855.19px;font-size:27.3px;color:#23282d;font-weight:700;letter-spacing:-0.424px;">Full Page Header</span>
<span class="t" style="left:1534.70px;top:1856.07px;font-size:26.26px;color:#969696;font-style:italic;letter-spacing:0.509px;-webkit-text-stroke:0.3px;">sub item</span>
<span class="t" style="left:1882.90px;top:1856.98px;font-size:24.24px;color:#9c9c9c;letter-spacing:0.443px;-webkit-text-stroke:0.3px;">Custom Link</span>
<div class="ar" style="left:2057px;top:1863px;width:0px;height:0px;"></div>
</li>
<li>
<div class="mi" style="left:1330px;top:1928px;width:828px;height:84px;"></div>
<span class="t b" style="left:1362.70px;top:1957.19px;font-size:27.3px;color:#23282d;font-weight:700;letter-spacing:-0.046px;">Default Version</span>
<span class="t" style="left:1575.60px;top:1958.07px;font-size:26.26px;color:#969696;font-style:italic;letter-spacing:0.509px;-webkit-text-stroke:0.3px;">sub item</span>
<span class="t" style="left:2028.00px;top:1958.98px;font-size:24.24px;color:#9c9c9c;letter-spacing:-0.407px;-webkit-text-stroke:0.3px;">Page</span>
<div class="ar" style="left:2117px;top:1965px;width:0px;height:0px;"></div>
</li>
<li>
<div class="mi" style="left:1330px;top:2030px;width:828px;height:84px;"></div>
<span class="t b" style="left:1362.70px;top:2059.19px;font-size:27.3px;color:#23282d;font-weight:700;letter-spacing:-0.249px;">Carousel Version</span>
<span class="t" style="left:1596.80px;top:2060.07px;font-size:26.26px;color:#969696;font-style:italic;letter-spacing:0.509px;-webkit-text-stroke:0.3px;">sub item</span>
<span class="t" style="left:2028.00px;top:2060.98px;font-size:24.24px;color:#9c9c9c;letter-spacing:-0.407px;-webkit-text-stroke:0.3px;">Page</span>
<div class="ar" style="left:2117px;top:2067px;width:0px;height:0px;"></div>
</li>
</ul>
</section>
<div style="left:1421px;top:803px;width:516px;height:516px;border-radius:50%;border:28px solid rgba(255,255,255,.5)"></div>
</main>
<footer>
<div style="left:0px;top:2078px;width:1132px;height:40px;background:#f1f1f1;border:2px solid #a9a9a9;border-radius:4px 8px 0 0"></div>
<span class="t" style="left:10.40px;top:2084.29px;font-size:22.22px;color:#000000;letter-spacing:0.825px;-webkit-text-stroke:0.7px;">www.creative-dive.de/themes/hannah/wp-admin/profile.php</span>
</footer>
</body>
</html>
